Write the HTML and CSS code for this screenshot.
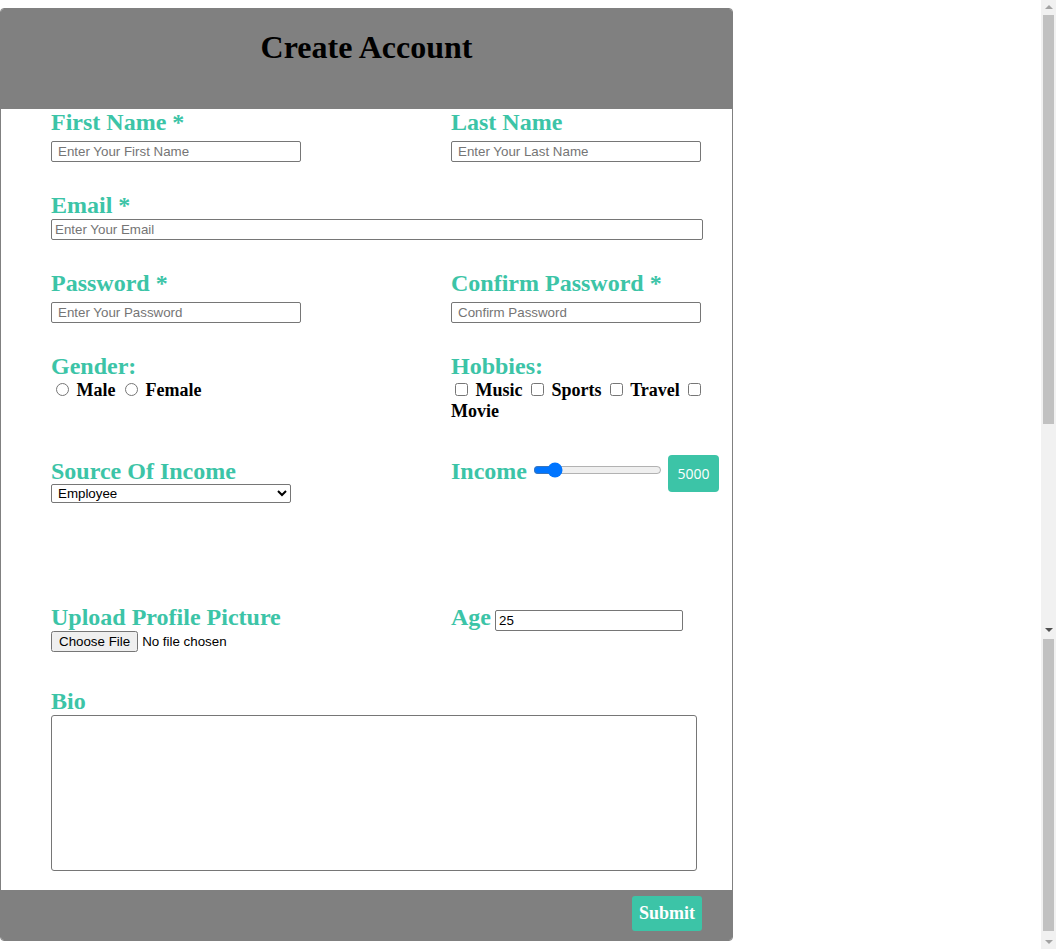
FILE: index.html
```html
<!DOCTYPE html>
<html lang="en">
<head>
<meta charset="utf-8">
<title>Create Account</title>
<link rel="stylesheet" href="styles.css">
</head>
<body>
<div class="card">
  <header class="head">
    <h1 class="title">Create Account</h1>
  </header>
  <form class="form">
    <div class="row two first">
      <div class="col">
        <label class="lbl">First Name *</label>
        <input class="half" type="text" placeholder="Enter Your First Name">
      </div>
      <div class="col">
        <label class="lbl">Last Name</label>
        <input class="half" type="text" placeholder="Enter Your Last Name">
      </div>
    </div>

    <div class="row gap29">
      <label class="lbl">Email *</label>
      <input class="full" type="email" placeholder="Enter Your Email">
    </div>

    <div class="row two gap29">
      <div class="col">
        <label class="lbl">Password *</label>
        <input class="half" type="password" placeholder="Enter Your Password">
      </div>
      <div class="col">
        <label class="lbl">Confirm Password *</label>
        <input class="half" type="password" placeholder="Confirm Password">
      </div>
    </div>

    <div class="row two gap29">
      <div class="col">
        <label class="lbl">Gender:</label>
        <div class="opts">
          <label><input type="radio" name="g"> Male</label>
          <label><input type="radio" name="g"> Female</label>
        </div>
      </div>
      <div class="col">
        <label class="lbl">Hobbies:</label>
        <div class="opts">
          <label><input type="checkbox"> Music</label>
          <label><input type="checkbox"> Sports</label>
          <label><input type="checkbox"> Travel</label>
          <label><input type="checkbox"> Movie</label>
        </div>
      </div>
    </div>

    <div class="row two income-row">
      <div class="col">
        <label class="lbl lbl-src">Source Of Income</label>
        <select class="sel">
          <option>Employee</option>
          <option>Business</option>
          <option>Other</option>
        </select>
      </div>
      <div class="col-inline">
        <label class="lbl lbl-inc">Income</label>
        <input class="range" type="range" min="0" max="40000" value="5000">
        <span class="badge">5000</span>
      </div>
    </div>

    <div class="row two upload-row">
      <div class="col">
        <label class="lbl">Upload Profile Picture</label>
        <input class="file" type="file">
      </div>
      <div class="col-inline">
        <label class="lbl lbl-age">Age</label>
        <input class="age" type="number" value="25">
      </div>
    </div>

    <div class="row bio-row">
      <label class="lbl">Bio</label>
      <textarea class="bio"></textarea>
    </div>
  </form>
  <footer class="foot">
    <button class="submit" type="button">Submit</button>
  </footer>
</div>

<div class="sbar">
  <div class="sb-arrow up light"></div>
  <div class="sb-thumb t1"></div>
  <div class="sb-arrow down dark"></div>
  <div class="sb-thumb t2"></div>
  <div class="sb-arrow down light bottom"></div>
</div>
</body>
</html>
```

FILE: styles.css
```css
html, body {
  background: #ffffff;
}
body {
  margin: 8px 0 0 0;
  font-family: "Liberation Serif", "Times New Roman", serif;
  color: #000;
}

.card {
  width: 733px;
  box-sizing: border-box;
  border: 1px solid #808080;
  border-radius: 4px;
  overflow: hidden;
  background: #fff;
}

.head {
  background: #808080;
  height: 100px;
  box-sizing: border-box;
  padding-top: 20px;
}
.title {
  margin: 0;
  text-align: center;
  font-size: 32px;
  font-weight: bold;
  line-height: normal;
  font-family: "Liberation Serif", "Times New Roman", serif;
}

.form {
  padding: 0 29px 19px 50px;
}

.row {
  display: flex;
  flex-direction: column;
  align-items: flex-start;
}
.row.two {
  display: grid;
  grid-template-columns: 400px 256px;
}
.first {
  margin-top: -1px;
}
.gap29 {
  margin-top: 29px;
}

.col {
  display: flex;
  flex-direction: column;
  align-items: flex-start;
}
.col-inline {
  display: flex;
  align-items: flex-start;
}

.lbl {
  display: block;
  font-family: "Liberation Serif", "Times New Roman", serif;
  font-weight: bold;
  font-size: 24px;
  line-height: 28px;
  color: #3cc4a7;
  white-space: nowrap;
}

input, select, textarea {
  font-family: "Liberation Sans", Arial, sans-serif;
  font-size: 13.333px;
}

.half, .full, .age {
  box-sizing: border-box;
  height: 21px;
  border: 1px solid #767676;
  border-radius: 2px;
  margin: 0;
}
.half {
  width: 250px;
  padding: 1px 6px;
  margin-top: 5px;
}
.full {
  width: 652px;
  padding: 1px 3px;
}
::placeholder {
  color: #757575;
}

.opts {
  font-size: 18px;
  font-weight: bold;
  line-height: normal;
}
.opts input {
  vertical-align: baseline;
}

.income-row {
  margin-top: 33px;
}
.lbl-src {
  margin-top: 2px;
}
.sel {
  box-sizing: border-box;
  width: 240px;
  height: 19px;
  margin: -1px 0 0 0;
  padding: 0 2px;
  border: 1px solid #767676;
  border-radius: 2px;
  background: #fff;
  color: #000;
}
.lbl-inc {
  margin-top: 2px;
}
.range {
  width: 129px;
  margin: 7px 6px 0 6px;
  flex-shrink: 0;
}
.badge {
  flex-shrink: 0;
  box-sizing: border-box;
  height: 37px;
  width: 51px;
  display: flex;
  align-items: center;
  justify-content: center;
  background: #3cc4a7;
  color: #fff;
  border-radius: 4px;
  font-family: "Open Sans", "Liberation Sans", sans-serif;
  font-size: 14px;
}

.upload-row {
  margin-top: 100px;
}
.file {
  margin: 0;
}
.lbl-age {
  margin-top: 0;
}
.age {
  width: 188px;
  padding: 1px 3px;
  margin: 7px 0 0 4px;
}

.bio-row {
  margin-top: 35px;
}
.bio {
  box-sizing: border-box;
  width: 646px;
  height: 156px;
  margin: 0;
  border: 1px solid #767676;
  border-radius: 3px;
  resize: none;
}

.foot {
  background: #808080;
  height: 50px;
  box-sizing: border-box;
  padding: 6px 30px 0 0;
  display: flex;
  justify-content: flex-end;
  align-items: flex-start;
}
.submit {
  height: 35px;
  padding: 0 7px;
  border: none;
  border-radius: 3px;
  background: #3cc4a7;
  color: #fff;
  font-family: "Liberation Serif", "Times New Roman", serif;
  font-weight: bold;
  font-size: 18px;
}

/* fake window scrollbar */
.sbar {
  position: fixed;
  top: 0;
  right: 0;
  width: 15px;
  height: 949px;
  background: #f1f1f1;
}
.sb-thumb {
  position: absolute;
  left: 2px;
  width: 11px;
  background: #c1c1c1;
}
.t1 { top: 15px; height: 409px; }
.t2 { top: 639px; height: 292px; }
.sb-arrow {
  position: absolute;
  left: 4px;
  width: 0;
  height: 0;
  border-left: 4px solid transparent;
  border-right: 4px solid transparent;
}
.sb-arrow.up {
  top: 5px;
  border-bottom: 4px solid #a3a3a3;
}
.sb-arrow.down {
  top: 628px;
}
.sb-arrow.down.bottom {
  top: 940px;
}
.sb-arrow.down.dark {
  border-top: 4px solid #505050;
}
.sb-arrow.down.light {
  border-top: 4px solid #a3a3a3;
}
```
